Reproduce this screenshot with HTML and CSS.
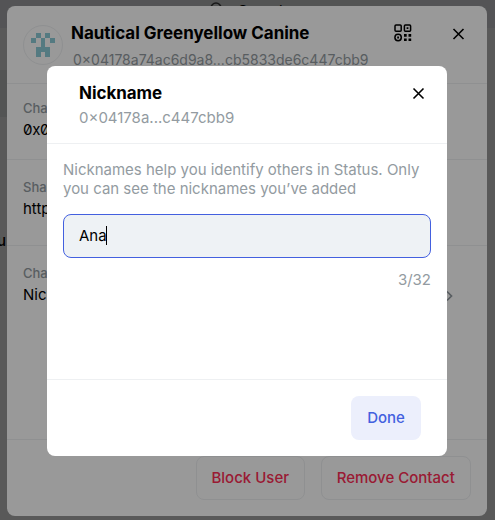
FILE: index.html
```html
<!DOCTYPE html>
<html lang="en">
<head>
<meta charset="utf-8">
<title>Nickname</title>
<link rel="stylesheet" href="styles.css">
</head>
<body>
<div class="app">
  <div class="app-panel"></div>
  <div class="app-search"><svg width="14" height="14" viewBox="0 0 14 14"><circle cx="6" cy="6" r="5"/><path d="M10 10l3 3"/></svg><span>Search</span></div>
  <div class="app-row"></div>
  <div class="app-text">u</div>
</div>
<div class="scrim"></div>
<section class="dialog profile">
  <header class="profile-head">
    <div class="avatar">
      <svg width="24" height="24" viewBox="0 0 5 5" shape-rendering="crispEdges"><path d="M1 0h1v1H1zM3 0h1v1H3zM0 1h1v1H0zM2 1h1v2H2zM4 1h1v1H4zM1 3h3v2H3V4H2v1H1z"/></svg>
    </div>
    <div class="profile-names">
      <h1>Nautical Greenyellow Canine</h1>
      <p>0×04178a74ac6d9a8...cb5833de6c447cbb9</p>
    </div>
    <svg class="qr" width="18" height="18" viewBox="0 0 18 18"><g fill="none" stroke="#000" stroke-width="1.5"><rect x="1" y="1" width="6.2" height="6.2" rx="1"/><rect x="10.4" y="1" width="6.2" height="6.2" rx="1"/><circle cx="4.1" cy="13.5" r="3.2"/></g><path d="M12.6 3.2h1.8V5h-1.8zM3.2 12.6H5v1.8H3.2zM10 10h2.7v2.7H10zM14.5 10h2.7v2.7h-2.7zM10 14.4h2.7v2.7H10zM14.5 14.4h2.7v2.7h-2.7z"/></svg>
    <svg class="close" width="12" height="12" viewBox="0 0 12 12"><path d="M1.5 1l10 10M11.5 1l-10 10"/></svg>
  </header>
  <div class="field chat-key"><label>Chat key</label><span class="key">0x0</span></div>
  <div class="field share"><label>Share</label><span>https</span></div>
  <div class="field settings"><label>Chat settings</label><span>Nickname</span>
    <svg class="chevron" width="7" height="12" viewBox="0 0 7 12"><path d="M1 1.5L5.5 6 1 10.5"/></svg>
  </div>
  <footer class="profile-foot"><button class="danger block">Block User</button><button class="danger remove">Remove Contact</button></footer>
</section>
<div class="scrim"></div>
<section class="dialog nickname">
  <header class="nick-head">
    <div>
      <h2>Nickname</h2>
      <p>0×04178a...c447cbb9</p>
    </div>
    <svg class="close" width="12" height="12" viewBox="0 0 12 12"><path d="M1.5 1.5l10 10M11.5 1.5l-10 10"/></svg>
  </header>
  <div class="nick-body">
    <p class="help">Nicknames help you identify others in Status. Only<br>you can see the nicknames you’ve added</p>
    <div class="input"><span>Ana</span><i class="caret"></i></div>
    <div class="count">3/32</div>
  </div>
  <footer class="nick-foot"><button class="done">Done</button></footer>
</section>
</body>
</html>
```
FILE: styles.css
```css
* { box-sizing: border-box; margin: 0; padding: 0; }
body {
  position: relative;
  width: 495px;
  height: 520px;
  overflow: hidden;
  background: #fff;
  color: #000;
  font: 15px/19px Inter, "Liberation Sans", sans-serif;
}
p { color: #939ba1; }
button { font: 500 15px/20px Inter, "Liberation Sans", sans-serif; border: 0; border-radius: 8px; height: 44px; }

.app, .scrim { position: absolute; inset: 0; }
.app { background: #f8f8f8; }
.app-panel { position: absolute; inset: 0 0 auto 0; height: 28px; background: #eaecee; }
.app-search {
  position: absolute; left: 200px; top: 0; width: 200px; height: 18px; padding: 1px 0 0 10px;
  display: flex; gap: 14px; background: #e6e9ec; overflow: hidden;
}
.app-search svg { margin-top: 1px; fill: none; stroke: #444; stroke-width: 1.5; }
.app-row { position: absolute; left: 0; top: 70px; width: 7px; height: 47px; background: #e6e9ec; }
.app-text { position: absolute; left: -3px; top: 231px; font-weight: 500; }
.scrim { background: rgba(0, 0, 0, .4); }

.dialog { position: absolute; display: flex; flex-direction: column; background: #fff; overflow: hidden; }
.profile { left: 7px; top: 6px; width: 480px; height: 510px; border-radius: 8px; }
.profile-head {
  display: flex; align-items: flex-start; height: 78px; padding: 19px 23px 0 16px;
  border-bottom: 1px solid #eef0f2;
}
.avatar {
  display: flex; align-items: center; justify-content: center;
  width: 40px; height: 40px; border: 1px solid #eef0f2; border-radius: 50%;
}
.avatar svg { fill: #8ccbd8; }
.profile-names { flex: 1; margin-left: 8px; white-space: nowrap; }
.profile-names h1 { font-size: 17px; line-height: 22px; font-weight: 700; margin-top: -3px; letter-spacing: -.02px; }
.profile-names p { margin: 6px 0 0 2px; font-size: 14px; line-height: 20px; }
.qr { margin-top: -1px; }
.close { stroke: #000; stroke-width: 1.6; fill: none; overflow: visible; }
.qr + .close { margin: 3px 0 0 40px; }

.field { display: flex; flex-direction: column; padding: 0 16px; border-bottom: 1px solid #eef0f2; }
.field label { font-size: 13px; line-height: 18px; font-weight: 500; color: #939ba1; }
.field span { line-height: 20px; margin-top: 3px; }
.chat-key { height: 76px; padding-top: 15px; }
.field .key { font-feature-settings: "zero", "calt" 0; letter-spacing: -.3px; }
.share { height: 86px; padding-top: 18px; }
.settings { position: relative; flex: 1; padding-top: 18px; }
.chevron { position: absolute; right: 34px; top: 44px; fill: none; stroke: #939ba1; stroke-width: 1.7; }
.profile-foot { display: flex; justify-content: flex-end; gap: 16px; height: 76px; padding: 16px 16px 0; }
.danger { border: 1px solid #eef0f2; background: transparent; color: #ff2d55; }
.block { width: 108.5px; }
.remove { width: 150.5px; }

.nickname { left: 47px; top: 66px; width: 400px; height: 390px; border-radius: 8px; }
.nick-head {
  display: flex; justify-content: space-between; height: 78px; padding: 16px 23px 0 32px;
  border-bottom: 1px solid #eef0f2;
}
.nick-head h2 { font-size: 17px; line-height: 22px; font-weight: 700; letter-spacing: -.05px; }
.nick-head p { margin-top: 4px; line-height: 20px; }
.nick-head .close { margin-top: 5px; }
.nick-body { flex: 1; padding: 16px 16px 0; }
.help { white-space: nowrap; letter-spacing: -.01px; }
.input {
  display: flex; align-items: center; height: 44px; margin-top: 16px; padding: 0 15px 1px;
  border: 1px solid #4360df; border-radius: 8px; background: #eef2f5;
}
.caret { width: 1px; height: 19px; margin-left: -1px; background: #000; }
.count { margin-top: 12px; text-align: right; color: #939ba1; }
.nick-foot { display: flex; justify-content: flex-end; height: 77px; padding: 16px 26px 0; border-top: 1px solid #eef0f2; }
.done { width: 70px; background: #eceffc; color: #4360df; }
```
